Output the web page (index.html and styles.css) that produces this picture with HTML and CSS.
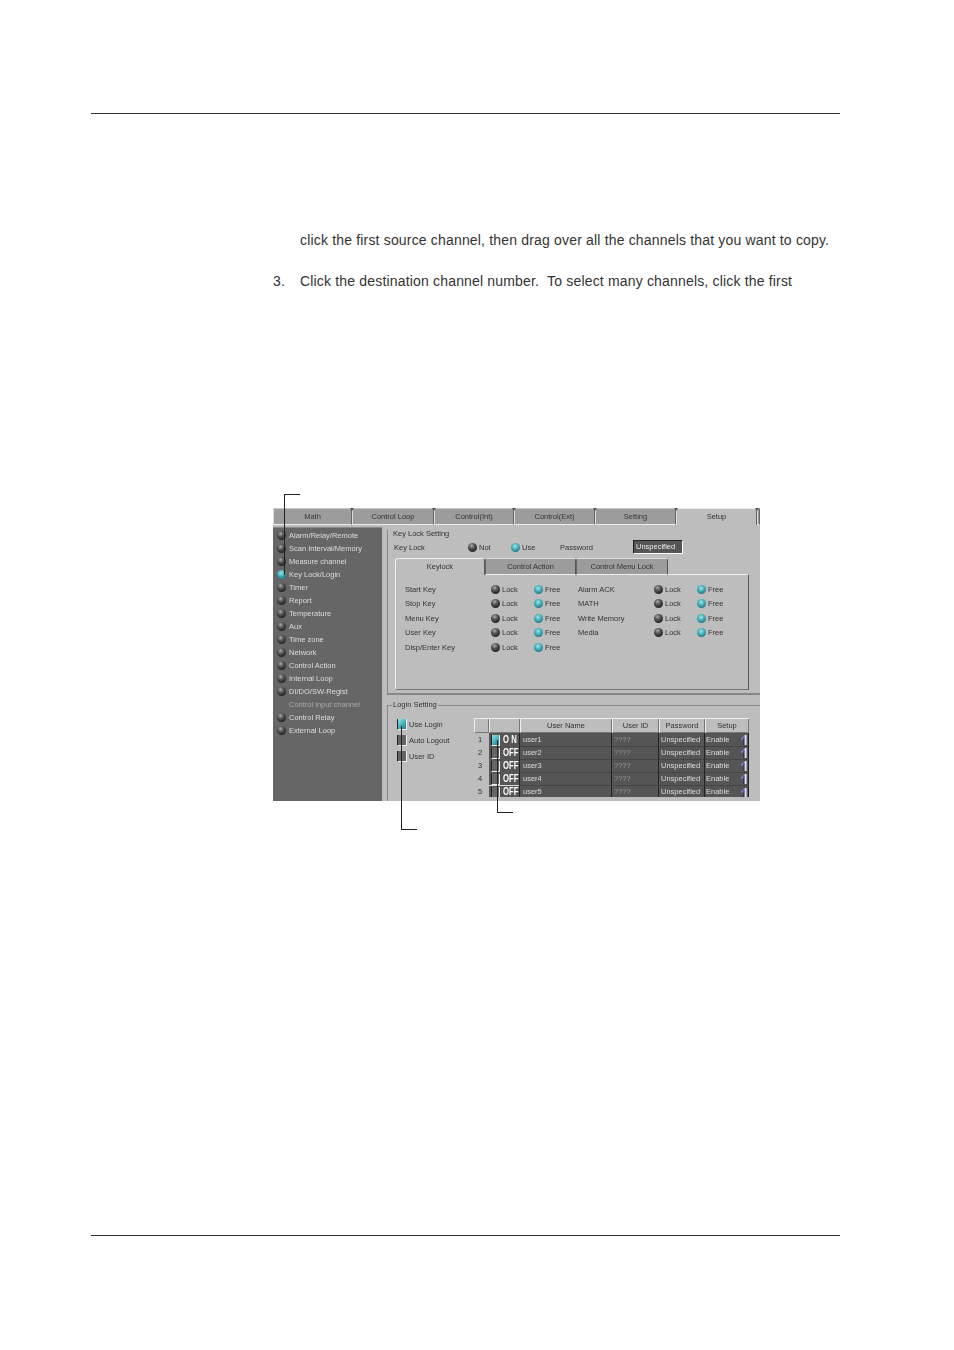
FILE: index.html
```html
<!DOCTYPE html>
<html lang="en">
<head>
    <meta charset="UTF-8">
    <title>Key Lock Login Setting</title>
    <link rel="stylesheet" href="styles.css">
</head>
<body>
<div class="page">
    <div class="rule-top"></div>
    <p class="line line-first">click the first source channel, then drag over all the channels that you want to copy.</p>
    <p class="line line-step"><span class="num">3.</span>Click the destination channel number.&nbsp; To select many channels, click the first</p>

    <div class="figure">
        <div class="shot">
            <div class="tabs">
                <div class="tab">Math</div>
                <div class="tab">Control Loop</div>
                <div class="tab">Control(Int)</div>
                <div class="tab">Control(Ext)</div>
                <div class="tab">Setting</div>
                <div class="tab tab-on">Setup</div>
                <div class="tab tab-end"></div>
            </div>
            <div class="body">
                <div class="side">
                    <div class="side-item"><i class="led"></i>Alarm/Relay/Remote</div>
                    <div class="side-item"><i class="led"></i>Scan Interval/Memory</div>
                    <div class="side-item"><i class="led"></i>Measure channel</div>
                    <div class="side-item"><i class="led led-on"></i>Key Lock/Login</div>
                    <div class="side-item"><i class="led"></i>Timer</div>
                    <div class="side-item"><i class="led"></i>Report</div>
                    <div class="side-item"><i class="led"></i>Temperature</div>
                    <div class="side-item"><i class="led"></i>Aux</div>
                    <div class="side-item"><i class="led"></i>Time zone</div>
                    <div class="side-item"><i class="led"></i>Network</div>
                    <div class="side-item"><i class="led"></i>Control Action</div>
                    <div class="side-item"><i class="led"></i>Internal Loop</div>
                    <div class="side-item"><i class="led"></i>DI/DO/SW-Regist</div>
                    <div class="side-item side-off"><i class="led-none"></i>Control input channel</div>
                    <div class="side-item"><i class="led"></i>Control Relay</div>
                    <div class="side-item"><i class="led"></i>External Loop</div>
                </div>
                <div class="main">
                    <div class="group group-key">
                        <div class="group-title">Key Lock Setting</div>
                        <div class="key-row">
                            <span class="key-label">Key Lock</span>
                            <span class="opt opt-not"><i class="led"></i>Not</span>
                            <span class="opt opt-use"><i class="led led-on"></i>Use</span>
                            <span class="key-pass">Password</span>
                            <span class="pass-box">Unspecified</span>
                        </div>
                        <div class="subtabs">
                            <div class="subtab subtab-on">Keylock</div>
                            <div class="subtab">Control Action</div>
                            <div class="subtab subtab-last">Control Menu Lock</div>
                        </div>
                        <div class="subpanel">
                            <div class="lock-grid">
                                <span>Start Key</span><span class="opt"><i class="led"></i>Lock</span><span class="opt"><i class="led led-on"></i>Free</span>
                                <span>Alarm ACK</span><span class="opt"><i class="led"></i>Lock</span><span class="opt"><i class="led led-on"></i>Free</span>
                                <span>Stop Key</span><span class="opt"><i class="led"></i>Lock</span><span class="opt"><i class="led led-on"></i>Free</span>
                                <span>MATH</span><span class="opt"><i class="led"></i>Lock</span><span class="opt"><i class="led led-on"></i>Free</span>
                                <span>Menu Key</span><span class="opt"><i class="led"></i>Lock</span><span class="opt"><i class="led led-on"></i>Free</span>
                                <span>Write Memory</span><span class="opt"><i class="led"></i>Lock</span><span class="opt"><i class="led led-on"></i>Free</span>
                                <span>User Key</span><span class="opt"><i class="led"></i>Lock</span><span class="opt"><i class="led led-on"></i>Free</span>
                                <span>Media</span><span class="opt"><i class="led"></i>Lock</span><span class="opt"><i class="led led-on"></i>Free</span>
                                <span>Disp/Enter Key</span><span class="opt"><i class="led"></i>Lock</span><span class="opt"><i class="led led-on"></i>Free</span>
                            </div>
                        </div>
                    </div>
                    <div class="group group-login">
                        <div class="group-title">Login Setting</div>
                        <div class="login-wrap">
                            <div class="checks">
                                <div class="check-row"><i class="box box-big box-on"></i>Use Login</div>
                                <div class="check-row"><i class="box box-big"></i>Auto Logout</div>
                                <div class="check-row"><i class="box box-big"></i>User ID</div>
                            </div>
                            <div class="table">
                                <div class="row row-head">
                                    <div></div><div></div><div>User Name</div><div>User ID</div><div>Password</div><div>Setup</div>
                                </div>
                                <div class="row">
                                    <div class="idx">1</div>
                                    <div class="sw"><i class="box box-on"></i><b>O N</b></div>
                                    <div class="cell cell-name">user1</div><div class="cell cell-dim">????</div><div class="cell">Unspecified</div>
                                    <div class="cell cell-setup">Enable<svg class="spin" viewBox="0 0 6 10"><path d="M0.5 4.5 L3.5 1.5" stroke="#8f8fe6" stroke-width="1.6" fill="none"/><path d="M3 2 V10" stroke="#1c1c4a" stroke-width="1"/><path d="M4.6 0 V10" stroke="#dcdcff" stroke-width="2"/></svg></div>
                                </div>
                                <div class="row">
                                    <div class="idx">2</div>
                                    <div class="sw"><i class="box"></i><b>OFF</b></div>
                                    <div class="cell cell-name">user2</div><div class="cell cell-dim">????</div><div class="cell">Unspecified</div>
                                    <div class="cell cell-setup">Enable<svg class="spin" viewBox="0 0 6 10"><path d="M0.5 4.5 L3.5 1.5" stroke="#8f8fe6" stroke-width="1.6" fill="none"/><path d="M3 2 V10" stroke="#1c1c4a" stroke-width="1"/><path d="M4.6 0 V10" stroke="#dcdcff" stroke-width="2"/></svg></div>
                                </div>
                                <div class="row">
                                    <div class="idx">3</div>
                                    <div class="sw"><i class="box"></i><b>OFF</b></div>
                                    <div class="cell cell-name">user3</div><div class="cell cell-dim">????</div><div class="cell">Unspecified</div>
                                    <div class="cell cell-setup">Enable<svg class="spin" viewBox="0 0 6 10"><path d="M0.5 4.5 L3.5 1.5" stroke="#8f8fe6" stroke-width="1.6" fill="none"/><path d="M3 2 V10" stroke="#1c1c4a" stroke-width="1"/><path d="M4.6 0 V10" stroke="#dcdcff" stroke-width="2"/></svg></div>
                                </div>
                                <div class="row">
                                    <div class="idx">4</div>
                                    <div class="sw"><i class="box"></i><b>OFF</b></div>
                                    <div class="cell cell-name">user4</div><div class="cell cell-dim">????</div><div class="cell">Unspecified</div>
                                    <div class="cell cell-setup">Enable<svg class="spin" viewBox="0 0 6 10"><path d="M0.5 4.5 L3.5 1.5" stroke="#8f8fe6" stroke-width="1.6" fill="none"/><path d="M3 2 V10" stroke="#1c1c4a" stroke-width="1"/><path d="M4.6 0 V10" stroke="#dcdcff" stroke-width="2"/></svg></div>
                                </div>
                                <div class="row row-sel">
                                    <div class="idx">5</div>
                                    <div class="sw"><i class="box"></i><b>OFF</b></div>
                                    <div class="cell cell-name">user5</div><div class="cell cell-dim">????</div><div class="cell">Unspecified</div>
                                    <div class="cell cell-setup">Enable<svg class="spin" viewBox="0 0 6 10"><path d="M0.5 4.5 L3.5 1.5" stroke="#8f8fe6" stroke-width="1.6" fill="none"/><path d="M3 2 V10" stroke="#1c1c4a" stroke-width="1"/><path d="M4.6 0 V10" stroke="#dcdcff" stroke-width="2"/></svg></div>
                                </div>
                            </div>
                        </div>
                    </div>
                </div>
            </div>
        </div>
        <div class="callout callout-a"></div>
        <div class="callout callout-b"></div>
        <div class="callout callout-c"></div>
    </div>

    <div class="rule-bottom"></div>
</div>
</body>
</html>
```

FILE: styles.css
```css
* {
    box-sizing: border-box;
}

body {
    margin: 0;
    background: #fff;
    color: #333;
    font-family: "Liberation Sans", Arial, sans-serif;
}

.page {
    width: 954px;
    height: 1350px;
    padding: 113px 114px 0 91px;
}

.rule-top {
    border-top: 1px solid #333;
}

.line {
    margin: 0;
    font-size: 14px;
    letter-spacing: 0.175px;
    line-height: 16px;
    white-space: nowrap;
}

.line-first {
    margin-top: 118px;
    padding-left: 209px;
}

.line-step {
    margin-top: 25px;
    padding-left: 182px;
}

.num {
    display: inline-block;
    width: 27px;
}

/* screenshot inside the page */
.figure {
    position: relative;
    margin: 219px 0 0 182px;
    width: 487px;
    height: 293px;
}

.shot {
    width: 487px;
    height: 293px;
    overflow: hidden;
    background: #bdbdbd;
    color: #333;
    font-size: 7.5px;
    line-height: 13px;
    filter: blur(0.35px);
}

.tabs {
    display: grid;
    grid-template-columns: 79px 82px 80px 81px 81px 81px 3px;
    height: 16px;
}

.tab {
    background: #9c9c9c;
    border-top: 1px solid #c8c8c8;
    border-left: 1px solid #ddd;
    border-right: 1px solid #666;
    border-bottom: 1px solid #eee;
    text-align: center;
    line-height: 15px;
    position: relative;
}

.tab::after {
    content: "";
    position: absolute;
    top: -1px;
    right: -3px;
    border: 2px solid transparent;
    border-top: 3px solid #555;
    z-index: 2;
}

.tab-on {
    background: #bdbdbd;
    border-bottom: 0;
    border-top-color: #eee;
}

.tab-end::after {
    display: none;
}

.body {
    display: flex;
    height: 277px;
}

.side {
    width: 109px;
    margin-top: 3px;
    padding: 1px 0 0 4px;
    background: #666;
    color: #ddd;
    border-top: 1px solid #888;
}

.side-item {
    display: flex;
    align-items: center;
    height: 13px;
    white-space: nowrap;
}

.side-off {
    color: #aaa;
}

.led {
    flex: none;
    display: inline-block;
    width: 9px;
    height: 9px;
    margin-right: 3px;
    border-radius: 50%;
    background: radial-gradient(circle at 40% 30%, #aaa 0, #555 35%, #222 75%);
}

.led-on {
    background: radial-gradient(circle at 45% 35%, #9fe4e8 0, #3fa9b4 45%, #1d5f6c 90%);
}

.led-none {
    flex: none;
    width: 12px;
}

.main {
    flex: 1;
    padding-left: 5px;
}

.group {
    position: relative;
    border-left: 1px solid #888;
    border-bottom: 1px solid #888;
}

.group-key {
    height: 165px;
    margin-top: 6px;
    border-bottom: 2px solid #888;
}

.group-login {
    height: 101px;
    margin-top: 10px;
    border-top: 1px solid #888;
    border-bottom: 0;
}

.group-title {
    position: absolute;
    top: -8px;
    left: 4px;
    padding: 0 1px;
    background: #bdbdbd;
    white-space: nowrap;
}

.group-key .group-title {
    top: -3px;
}

.key-row {
    display: flex;
    align-items: center;
    height: 14px;
    padding: 10px 0 0 6px;
    box-sizing: content-box;
}

.key-label {
    width: 74px;
}

.opt {
    display: flex;
    align-items: center;
}

.opt .led {
    margin-right: 2px;
}

.opt-not {
    width: 43px;
}

.opt-use {
    width: 49px;
}

.key-pass {
    width: 73px;
}

.pass-box {
    width: 50px;
    height: 14px;
    padding-left: 2px;
    background: #555;
    color: #eee;
    border: 1px solid #fff;
    border-top-color: #222;
    border-left-color: #222;
    line-height: 12px;
}

.subtabs {
    display: flex;
    height: 17px;
    margin: 4px 0 0 7px;
}

.subtab {
    width: 91px;
    background: #9c9c9c;
    border-top: 1px solid #ddd;
    border-left: 1px solid #666;
    border-right: 1px solid #555;
    border-bottom: 1px solid #eee;
    border-radius: 3px 3px 0 0;
    text-align: center;
    line-height: 15px;
}

.subtab-on {
    position: relative;
    z-index: 1;
    width: 90px;
    background: #bdbdbd;
    border-top-color: #eee;
    border-left-color: #eee;
    border-bottom: 0;
}

.subtab-last {
    width: 92px;
}

.subpanel {
    width: 354px;
    height: 116px;
    margin: -1px 0 0 7px;
    padding: 7px 0 0 9px;
    border-top: 1px solid #eee;
    border-left: 1px solid #eee;
    border-right: 1px solid #555;
    border-bottom: 1px solid #777;
}

.lock-grid {
    display: grid;
    grid-template-columns: 86px 43px 44px 76px 43px 40px;
    grid-auto-rows: 14.5px;
    align-items: center;
    white-space: nowrap;
}

.login-wrap {
    display: flex;
    padding: 12px 0 0 9px;
}

.checks {
    width: 77px;
    margin-top: -2px;
}

.check-row {
    display: flex;
    align-items: center;
    height: 16px;
}

.box {
    flex: none;
    display: inline-block;
    width: 9px;
    height: 11px;
    background: #666;
    border-left: 1px solid #222;
    border-right: 1px solid #eee;
    border-bottom: 1px solid #eee;
    margin-right: 3px;
}

.box-big {
    width: 10px;
    margin-right: 2px;
}

.box-on {
    background: linear-gradient(135deg, #8fe6ea 0, #3fa9b4 60%, #2c7f8c 100%);
}

.table {
    width: 275px;
    height: 79px;
    overflow: hidden;
    flex: none;
}

.row {
    display: grid;
    grid-template-columns: 15px 31px 92px 47px 46px 44px;
    height: 13px;
    line-height: 14px;
    background: #555;
    color: #ddd;
}

.row > div {
    border-right: 1px solid #222;
    white-space: nowrap;
    overflow: hidden;
}

.row-head {
    height: 15px;
    background: #bdbdbd;
    color: #333;
    border-top: 1px solid #eee;
    line-height: 13px;
    text-align: center;
}

.row-head > div {
    border-right: 1px solid #777;
    border-left: 1px solid #eee;
    border-bottom: 1px solid #777;
}

.row .idx {
    background: #bdbdbd;
    color: #333;
    padding-left: 4px;
    border-right: 0;
}

.row-sel {
    line-height: 12px;
    border-top: 1px solid #ddd;
}

.cell {
    padding-left: 2px;
    border-bottom: 1px solid #444;
}

.cell-name {
    padding-left: 3px;
}

.cell-dim {
    color: #999;
}

.cell-setup {
    position: relative;
    padding-left: 1px;
}

.spin {
    position: absolute;
    top: 2px;
    right: 1px;
    width: 6px;
    height: 10px;
}

.row > .sw {
    display: flex;
    align-items: center;
    padding-left: 2px;
    overflow: visible;
}

.sw b {
    flex: none;
    width: 16px;
    color: #fff;
    font-size: 11px;
    transform: translateY(-1px) scaleX(0.7);
    transform-origin: left center;
}

/* pointer lines from the manual text */
.callout {
    position: absolute;
    border-left: 1px solid #222;
    border-top: 1px solid #222;
    width: 16px;
}

.callout-a {
    left: 11px;
    top: -14px;
    height: 81px;
}

.callout-b {
    left: 128px;
    top: 218px;
    height: 104px;
    border-top: 0;
    border-bottom: 1px solid #222;
}

.callout-c {
    left: 224px;
    top: 232px;
    height: 73px;
    border-top: 0;
    border-bottom: 1px solid #222;
}

.rule-bottom {
    margin-top: 434px;
    border-top: 1px solid #333;
}
```
